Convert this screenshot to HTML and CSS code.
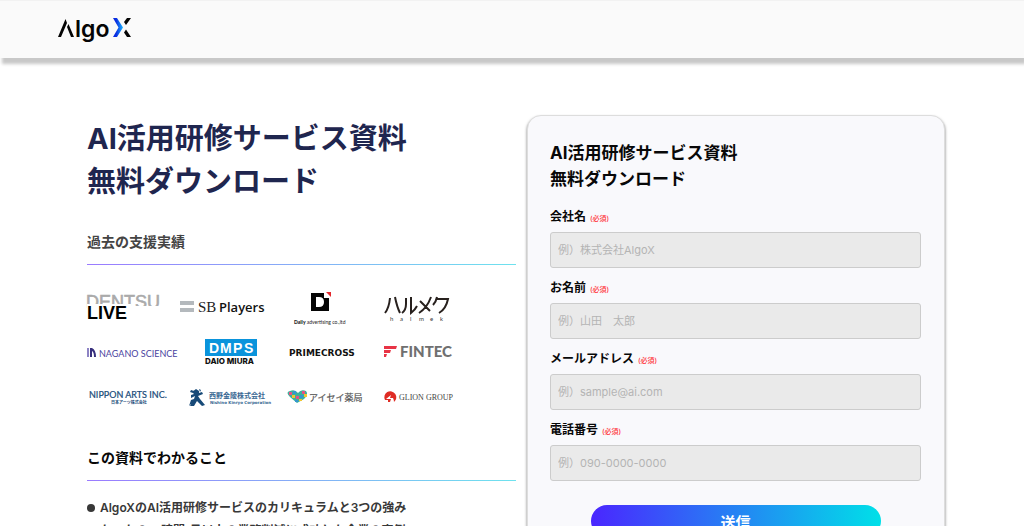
FILE: index.html
```
<!DOCTYPE html>
<html lang="ja">
<head>
<meta charset="utf-8">
<meta name="viewport" content="width=device-width, initial-scale=1">
<title>AI活用研修サービス資料 無料ダウンロード</title>
<link rel="stylesheet" href="styles.css">
</head>
<body>
<header class="site-header">
  <a href="#" class="brand" aria-label="AlgoX">
    <svg width="76" height="30" viewBox="0 0 76 30">
      <defs><linearGradient id="xg" x1="0" x2="1"><stop offset="0.3" stop-color="#0a2be0"/><stop offset="1" stop-color="#18b4ff"/></linearGradient></defs>
      <path d="M1 22 8.500 4 10 8 4 22ZM10 12 11.500 9 17 22H14Z" fill="#050505"/>
      <text x="18" y="22" class="brand-text">lgo</text>
      <path d="M56 3H60L66 12.500 60 22H56L61.500 12.500Z" fill="url(#xg)"/>
      <path d="M70 3H74L69 10 67 7ZM67 17.500 69 14.500 74 22H70Z" fill="#050505"/>
    </svg>
  </a>
</header>
<main class="page">
  <section class="intro">
    <h1>AI活用研修サービス資料<br>無料ダウンロード</h1>
    <h2 class="muted">過去の支援実績</h2>
    <div class="logos">
      <svg viewBox="0 0 93 44"><text x="-1" y="21" font-size="18" fill="#aaa" stroke="#aaa" stroke-width=".6" class="ls">DENTSU</text><path d="M0 17H44V35H0ZM44 19H80V24H44Z" fill="#fff"/><text x="0" y="32" font-size="18" font-weight="700" class="ls">LIVE</text></svg>
      <svg viewBox="0 0 93 44"><path d="M0 14H14V18H0ZM0 21H14V25H0Z" fill="#b4b9bd"/><text x="18" y="25" font-size="15" class="serif" fill="#222">SB</text><text x="39" y="25" font-size="13" font-weight="600" class="open" fill="#111">Players</text></svg>
      <svg viewBox="0 0 93 44"><path fill-rule="evenodd" d="M38 6H51V11H56V24H38ZM43 10V20H46Q51 20 51 15T46 10Z" fill="#050505"/><path d="M53 5H58V10Z" fill="#e3272c"/><text x="21" y="37" font-size="5" class="lato" fill="#222"><tspan font-weight="900">Daily</tspan> advertising co.,ltd</text></svg>
      <svg viewBox="0 0 93 44"><path d="M24 11Q23 21 19 26M29 10Q31 20 34 26M40 11V17Q40 23 36 26M45 10V26Q49 23 51 19M65 10Q61 21 53 26M54 14 64 24M71 10Q70 15 67 18M71 12H82Q80 22 73 26" fill="none" stroke="#28211e" stroke-width="2"/><g font-size="6" class="lato" fill="#333"><text x="24" y="34">h</text><text x="34" y="34">a</text><text x="44" y="34">l</text><text x="53" y="34">m</text><text x="64" y="34">e</text><text x="74" y="34">k</text></g></svg>

      <svg viewBox="0 0 93 44"><path d="M0 17H2V26H0Z" fill="#8d83c4"/><path d="M3 26V17H5Q9 19 9 26H7Q7 21 5 20V26Z" fill="#38307d"/><text x="12" y="26" font-size="9" class="lato" fill="#4a43a0">NAGANO SCIENCE</text></svg>
      <svg viewBox="0 0 93 44"><path d="M25 8H77V25H25Z" fill="#0a94dc"/><g fill="#fff" font-size="14" font-weight="700" class="ls"><text x="29" y="22">D</text><text x="40" y="22">M</text><text x="53" y="22">P</text><text x="64" y="22">S</text></g><text x="25" y="33" font-size="8" font-weight="800" class="inter" fill="#111">DAIO MIURA</text></svg>
      <svg viewBox="0 0 93 44"><text x="16" y="25" font-size="9" font-weight="700" class="verdana" fill="#111">PRIMECROSS</text></svg>
      <svg viewBox="0 0 93 44"><path d="M18 15H31L30 18H18ZM18 19H25L24 22H18ZM18 23H21L20 26H18Z" fill="#e83446"/><text x="34" y="26" font-size="15" font-weight="900" class="lato" fill="#707070">FINTEC</text></svg>

      <svg viewBox="0 0 93 44"><text x="2" y="23" font-size="9" class="lato" fill="#174a78" stroke="#174a78" stroke-width=".2">NIPPON ARTS INC.</text><text x="24" y="29" font-size="4" font-weight="700" class="jp" fill="#174a78">日本アーツ株式会社</text></svg>
      <svg viewBox="0 0 93 44"><path d="M16 14 19 16V18L22 17 23 19 18 21 20 24 25 30 22 31 17 26 14 31H10L14 24 15 21 11 23V20L14 19 12 17ZM11 15 14 16 13 18 10 17ZM19 14 21 15 20 17ZM11 25 14 24 13 27 9 31Z" fill="#174a78"/><text x="29" y="23" font-size="7" font-weight="700" class="jp" fill="#386792">西野金陵株式会社</text><text x="30" y="29" font-size="4" font-weight="700" class="verdana" fill="#386792">Nishino Kinryo Corporation</text></svg>
      <svg viewBox="0 0 93 44"><path d="M24 28 17 22Q12 17 17 16 22 14 25 18 28 14 33 16 36 19 31 24Z" fill="#3bb19b"/><path d="M16 17h3v3h-3zM23 21h3v3h-3zM29 16h3v3h-3z" fill="#e65283"/><path d="M19 20h3v3h-3zM26 24h3v2h-3zM31 19h3v3h-3z" fill="#f1c530"/><path d="M20 16h3v3h-3zM27 20h3v3h-3zM22 25h3v2h-3z" fill="#3695d0"/><text x="36" y="26" font-size="9" class="jp" fill="#555" stroke="#555" stroke-width=".2">アイセイ薬局</text></svg>
      <svg viewBox="0 0 93 44"><path d="M19 25A6 6 0 1 1 28 27Q28 25 27 23H24L25 20 20 24H25L24 27H22L22 25Z" fill="#df2c24"/><text x="33" y="25" font-size="8" class="serif" fill="#444">GLION GROUP</text></svg>
    </div>
    <h2>この資料でわかること</h2>
    <ul class="points">
      <li>AlgoXのAI活用研修サービスのカリキュラムと3つの強み</li>
      <li>たったの10時間/月以上の業務削減に成功した企業の事例</li>
    </ul>
  </section>
  <form class="card">
    <p class="card-title">AI活用研修サービス資料<br>無料ダウンロード</p>
    <div class="field"><label for="company">会社名 <span>(必須)</span></label><input id="company" type="text" placeholder="例）株式会社AlgoX"></div>
    <div class="field"><label for="name">お名前 <span>(必須)</span></label><input id="name" type="text" placeholder="例）山田　太郎"></div>
    <div class="field"><label for="email">メールアドレス <span>(必須)</span></label><input id="email" type="email" placeholder="例）sample@ai.com"></div>
    <div class="field"><label for="tel">電話番号 <span>(必須)</span></label><input id="tel" type="tel" placeholder="例）090-0000-0000"></div>
    <button type="submit">送信</button>
  </form>
</main>
</body>
</html>
```
FILE: styles.css
```
* { box-sizing: border-box; }
body {
  margin: 0;
  background: #fff;
  color: #080808;
  font-family: Inter, "Noto Sans CJK JP", sans-serif;
}
html { scrollbar-width: none; }
.site-header {
  display: flex;
  align-items: center;
  height: 58px;
  padding: 0 57px;
  background: #fafafa;
  border-top: 1px solid #f2f2f2;
  box-shadow: 2px 6px 3px #c8c8c8;
}
.brand { display: flex; }
.brand-text { font: 600 23px Inter, sans-serif; fill: #050505; }
.page {
  display: grid;
  grid-template-columns: 429fr 418fr;
  gap: 11px;
  align-items: start;
  padding: 57px 79px 40px 87px;
}
.intro { padding-top: 2px; }
h1 {
  margin: 0 0 29px;
  font-size: 29px;
  line-height: 43px;
  font-weight: 700;
  color: #1f264f;
}
h2 {
  margin: 0;
  padding-bottom: 13px;
  font-size: 14px;
  line-height: 20px;
  font-weight: 700;
  background: linear-gradient(90deg, #9b7bff, #6ee2ee) bottom / 100% 1px no-repeat;
}
.muted { color: #444; }
.logos {
  display: grid;
  grid-template-columns: repeat(4, 93px);
  grid-auto-rows: 44px;
  padding: 22px 0 29px;
}
.logos svg { width: 93px; height: 44px; overflow: visible; }
.ls { font-family: "Liberation Sans", sans-serif; }
.serif { font-family: "Liberation Serif", serif; }
.open { font-family: "Open Sans", sans-serif; }
.lato { font-family: Lato, sans-serif; }
.inter { font-family: Inter, sans-serif; }
.jp { font-family: "Noto Sans CJK JP", sans-serif; }
.verdana { font-family: "DejaVu Sans", sans-serif; }
.points {
  margin: 0;
  padding: 15px 0 0;
  list-style: none;
  font-size: 12px;
  line-height: 23px;
  font-weight: 600;
  color: #383838;
}
.points li { display: flex; align-items: center; gap: 5px; white-space: nowrap; }
.points li::before { content: ""; width: 8px; height: 8px; border-radius: 50%; background: #383838; }
.card {
  display: flex;
  flex-direction: column;
  padding: 24px 23px 23px 22px;
  background: #f9f9fc;
  border: 1px solid #ddd;
  border-radius: 14px;
  box-shadow: 0 2px 3px #777;
}
.card-title {
  margin: 0 0 15px;
  font-size: 17px;
  line-height: 26px;
  font-weight: 700;
}
.field { display: flex; flex-direction: column; margin-bottom: 10px; }
label {
  display: flex;
  align-items: baseline;
  gap: 4px;
  height: 20px;
  margin-bottom: 5px;
  font-size: 12px;
  line-height: 20px;
  font-weight: 700;
}
label span { font-size: 7px; font-weight: 500; color: #ff3038; }
input {
  width: 100%;
  height: 36px;
  padding: 0 7px;
  font: 11px Inter, "Noto Sans CJK JP", sans-serif;
  background: #eaeaea;
  border: 1px solid #ccc;
  border-radius: 3px;
}
input::placeholder { color: #b4b4b4; opacity: 1; }
button {
  align-self: center;
  width: 290px;
  height: 32px;
  margin-top: 14px;
  border: 0;
  border-radius: 16px;
  background: linear-gradient(90deg, #4a26ff, #00e0e8);
  color: #fff;
  font: 700 15px "Noto Sans CJK JP", sans-serif;
}
```
